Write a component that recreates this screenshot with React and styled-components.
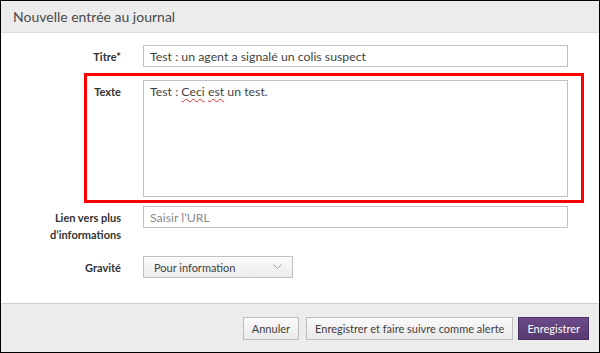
import React from 'react';
import styled, { createGlobalStyle } from 'styled-components';

const GlobalStyle = createGlobalStyle`
  html, body {
    margin: 0;
    padding: 0;
    background: #ffffff;
  }
  * {
    box-sizing: border-box;
  }
`;

const Dialog = styled.div`
  width: 600px;
  height: 353px;
  border: 1px solid #000;
  display: flex;
  flex-direction: column;
  font-family: Lato, 'Liberation Sans', sans-serif;
  font-size: 12px;
  color: #333;
  background: #fff;
`;

const Header = styled.div`
  height: 32px;
  flex: none;
  background: #ececec;
  border-bottom: 1px solid #dcdcdc;
  padding: 0 12px;
  display: flex;
  align-items: center;
  font-size: 14px;
  color: #4a4a4a;
`;

const Form = styled.div`
  flex: 1;
  padding-top: 12px;
  display: flex;
  flex-direction: column;
`;

const Row = styled.div`
  position: relative;
  display: grid;
  grid-template-columns: 120px 425px;
  column-gap: 22px;
  margin-bottom: ${p => p.$gap}px;

  ${p => p.$highlight && `
    &::after {
      content: '';
      position: absolute;
      left: 83px;
      right: 15px;
      top: -7px;
      bottom: -6px;
      border: 3px solid #ff0000;
      pointer-events: none;
    }
  `}
`;

const Label = styled.div`
  text-align: right;
  font-weight: 700;
  font-size: 11px;
  line-height: 17px;
  padding-top: 3px;
  color: #333;
`;

const Field = styled.div`
  height: ${p => p.$h}px;
  border: 1px solid #c2c2c2;
  background: #fff;
  padding: 2px 6px;
  line-height: 17px;
  font-size: 12.3px;
  color: ${p => (p.$placeholder ? '#8a8a8a' : '#3f3f3f')};
`;

const Squiggle = styled.span`
  text-decoration: underline wavy #e03030;
  text-decoration-thickness: 1px;
  text-underline-offset: 2px;
`;

const Select = styled.div`
  width: 150px;
  height: 22px;
  border: 1px solid #c2c2c2;
  background: linear-gradient(#fbfbfb, #ececec);
  padding: 0 10px;
  display: flex;
  align-items: center;
  justify-content: space-between;
  font-size: 11px;
  color: #3f3f3f;
`;

const Footer = styled.div`
  height: 49px;
  flex: none;
  background: #ececec;
  border-top: 1px solid #cfcfcf;
  display: flex;
  align-items: center;
  justify-content: flex-end;
  padding-right: 10px;
`;

const Button = styled.div`
  height: 23px;
  padding: 0 8px;
  margin-left: ${p => p.$gap || 0}px;
  display: flex;
  align-items: center;
  font-size: 11px;
  border: 1px solid ${p => (p.$primary ? '#4b2f62' : '#bdbdbd')};
  background: ${p =>
    p.$primary
      ? 'linear-gradient(#6c4b8a, #573a6f)'
      : 'linear-gradient(#fafafa, #e9e9e9)'};
  color: ${p => (p.$primary ? '#fff' : '#3f3f3f')};
`;

const Chevron = () => (
  <svg width="9" height="6" viewBox="0 0 9 6">
    <path d="M0.5 0.5 L4.5 4.5 L8.5 0.5" fill="none" stroke="#9a9a9a" strokeWidth="1" />
  </svg>
);

const App = () => {
  return (
    <>
      <GlobalStyle />
      <Dialog>
        <Header>Nouvelle entrée au journal</Header>
        <Form>
          <Row $gap={13}>
            <Label>Titre*</Label>
            <Field $h={22}>Test : un agent a signalé un colis suspect</Field>
          </Row>
          <Row $gap={9} $highlight>
            <Label>Texte</Label>
            <Field $h={117}>
              Test : <Squiggle>Ceci</Squiggle> <Squiggle>est</Squiggle> un test.
            </Field>
          </Row>
          <Row $gap={13}>
            <Label>
              Lien vers plus
              <br />
              d’informations
            </Label>
            <Field $h={22} $placeholder>Saisir l’URL</Field>
          </Row>
          <Row $gap={0}>
            <Label>Gravité</Label>
            <div>
              <Select>
                Pour information
                <Chevron />
              </Select>
            </div>
          </Row>
        </Form>
        <Footer>
          <Button>Annuler</Button>
          <Button $gap={7}>Enregistrer et faire suivre comme alerte</Button>
          <Button $gap={5} $primary>Enregistrer</Button>
        </Footer>
      </Dialog>
    </>
  );
};

export default App;
